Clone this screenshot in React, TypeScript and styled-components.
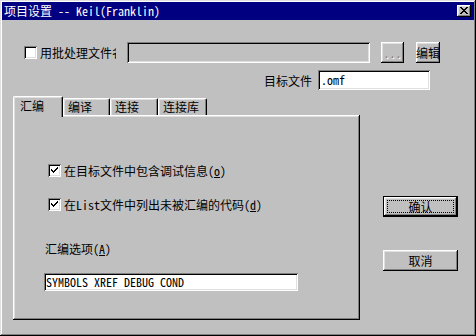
import React from "react";
import styled, { createGlobalStyle } from "styled-components";

const FONT = `"Noto Sans Mono CJK SC", "Noto Sans CJK SC", "Liberation Mono", monospace`;

const raised = `inset -1px -1px #000, inset 1px 1px #fff, inset -2px -2px #808080, inset 2px 2px #dfdfdf`;
const sunken = `inset 1px 1px #808080, inset -1px -1px #fff, inset 2px 2px #000, inset -2px -2px #dfdfdf`;

const Global = createGlobalStyle`
  html, body { margin: 0; padding: 0; background: #c0c0c0; }
  body { font-family: ${FONT}; font-size: 12px; color: #000; }
  * { box-sizing: border-box; }
`;

const Window = styled.div`
  width: 476px;
  height: 336px;
  padding: 2px;
  background: #c0c0c0;
  box-shadow: inset -1px -1px #000, inset 1px 1px #dfdfdf, inset -2px -2px #808080, inset 2px 2px #fff;
  display: flex;
  flex-direction: column;
`;

const TitleBar = styled.div`
  height: 18px;
  background: #000080;
  color: #fff;
  display: flex;
  align-items: center;
  justify-content: space-between;
  padding: 0 3px 0 2px;
  line-height: 12px;
`;

const CloseBtn = styled.div`
  width: 14px;
  height: 12px;
  background: #c0c0c0;
  box-shadow: ${raised};
  display: flex;
  align-items: center;
  justify-content: center;
  padding-bottom: 1px;
`;

const Content = styled.div`
  display: flex;
  flex-direction: column;
  padding-top: 22px;
`;

const Row = styled.div`
  height: 21px;
  display: flex;
  align-items: center;
  padding-left: 22px;
`;

const TargetRow = styled.div`
  margin-top: 7px;
  height: 20px;
  display: flex;
  align-items: center;
  justify-content: flex-end;
  padding-right: 44px;
`;

const Box = styled.div<{ $gap?: number }>`
  width: 13px;
  height: 13px;
  flex: none;
  background: #fff;
  box-shadow: ${sunken};
  display: flex;
  align-items: center;
  justify-content: center;
  margin-right: ${(p) => p.$gap ?? 3}px;
`;

const ClipLabel = styled.span`
  width: 76px;
  overflow: hidden;
  white-space: nowrap;
  line-height: 14px;
`;

const Field = styled.div<{ $w: number; $h: number; $ml: number; $disabled?: boolean }>`
  width: ${(p) => p.$w}px;
  height: ${(p) => p.$h}px;
  margin-left: ${(p) => p.$ml}px;
  background: ${(p) => (p.$disabled ? "#c0c0c0" : "#fff")};
  box-shadow: ${sunken};
  display: flex;
  align-items: center;
  padding-left: 3px;
  white-space: nowrap;
  line-height: 14px;
`;

const Button = styled.div<{ $w: number; $h: number; $ml?: number; $mt?: number; $dim?: boolean }>`
  width: ${(p) => p.$w}px;
  height: ${(p) => p.$h}px;
  margin-left: ${(p) => p.$ml ?? 0}px;
  margin-top: ${(p) => p.$mt ?? 0}px;
  background: #c0c0c0;
  box-shadow: ${raised};
  display: flex;
  align-items: center;
  justify-content: center;
  color: ${(p) => (p.$dim ? "#808080" : "#000")};
  text-shadow: ${(p) => (p.$dim ? "1px 1px #fff" : "none")};
  line-height: 14px;
  white-space: nowrap;
`;

const DefaultButton = styled.div<{ $mt: number }>`
  width: 75px;
  height: 21px;
  margin-top: ${(p) => p.$mt}px;
  border: 1px solid #000;
  background: #c0c0c0;
  box-shadow: ${raised};
  padding: 3px;
  display: flex;
`;

const FocusRing = styled.div`
  flex: 1;
  border: 1px dotted #000;
  display: flex;
  align-items: center;
  justify-content: center;
  line-height: 12px;
`;

const Main = styled.div`
  margin-top: 6px;
  display: flex;
  padding-left: 11px;
`;

const TabArea = styled.div`
  width: 347px;
  display: flex;
  flex-direction: column;
`;

const TabRow = styled.div`
  height: 19px;
  display: flex;
  align-items: flex-end;
`;

const Tab = styled.div<{ $w: number; $active?: boolean }>`
  width: ${(p) => p.$w}px;
  height: ${(p) => (p.$active ? 21 : 17)}px;
  margin-bottom: ${(p) => (p.$active ? -2 : 0)}px;
  position: relative;
  z-index: ${(p) => (p.$active ? 2 : 1)};
  background: #c0c0c0;
  border-top: 1px solid #fff;
  border-left: 1px solid #fff;
  border-right: 1px solid #000;
  border-radius: 2px 2px 0 0;
  box-shadow: inset -1px 0 #808080, inset 1px 1px #dfdfdf;
  padding-left: ${(p) => (p.$active ? 6 : 4)}px;
  padding-top: ${(p) => (p.$active ? 2 : 1)}px;
  line-height: 13px;
  white-space: nowrap;
`;

const Panel = styled.div`
  height: 205px;
  background: #c0c0c0;
  box-shadow: inset -1px -1px #000, inset 1px 1px #fff, inset -2px -2px #808080, inset 2px 2px #dfdfdf;
  display: flex;
  flex-direction: column;
  padding: 49px 0 0 31px;
`;

const CheckRow = styled.div<{ $mt: number }>`
  margin-top: ${(p) => p.$mt}px;
  margin-left: 4px;
  height: 13px;
  display: flex;
  align-items: center;
  line-height: 14px;
  white-space: nowrap;
`;

const OptionLabel = styled.div`
  margin-top: 31px;
  padding-left: 1px;
  line-height: 14px;
`;

const OptionField = styled.div`
  margin-top: 17px;
  width: 254px;
  height: 18px;
  background: #fff;
  box-shadow: ${sunken};
  display: flex;
  align-items: center;
  padding-left: 2px;
  line-height: 12px;
  white-space: nowrap;
`;

const ButtonColumn = styled.div`
  margin-left: 23px;
  width: 75px;
  display: flex;
  flex-direction: column;
`;

const Check = () => (
  <svg width="9" height="9" viewBox="0 0 9 9" shapeRendering="crispEdges">
    <path d="M1 3h1v1h1v1h1V4h1V3h1V2h1V1h1v2H7v1H6v1H5v1H4v1H3V6H2V5H1z" fill="#000" />
  </svg>
);

const XIcon = () => (
  <svg width="8" height="7" viewBox="0 0 8 7" shapeRendering="crispEdges">
    <path d="M0 0h2v1h1v1h2V1h1V0h2v1H7v1H6v1H5v1h1v1h1v1h1v1H6V6H5V5H3v1H2v1H0V6h1V5h1V4h1V3H2V2H1V1H0z" fill="#000" />
  </svg>
);

export default function App() {
  return (
    <>
      <Global />
      <Window>
        <TitleBar>
          <span>项目设置 -- Keil(Franklin)</span>
          <CloseBtn>
            <XIcon />
          </CloseBtn>
        </TitleBar>
        <Content>
          <Row>
            <Box />
            <ClipLabel>用批处理文件名</ClipLabel>
            <Field $w={243} $h={21} $ml={11} $disabled />
            <Button $w={23} $h={21} $ml={11} $dim>...</Button>
            <Button $w={24} $h={21} $ml={12}>编辑</Button>
          </Row>
          <TargetRow>
            <span>目标文件</span>
            <Field $w={112} $h={20} $ml={6}>.omf</Field>
          </TargetRow>
          <Main>
            <TabArea>
              <TabRow>
                <Tab $w={50} $active>汇编</Tab>
                <Tab $w={47}>编译</Tab>
                <Tab $w={48}>连接</Tab>
                <Tab $w={49}>连接库</Tab>
              </TabRow>
              <Panel>
                <CheckRow $mt={0}>
                  <Box><Check /></Box>
                  在目标文件中包含调试信息(<u>o</u>)
                </CheckRow>
                <CheckRow $mt={21}>
                  <Box><Check /></Box>
                  在List文件中列出未被汇编的代码(<u>d</u>)
                </CheckRow>
                <OptionLabel>
                  汇编选项(<u>A</u>)
                </OptionLabel>
                <OptionField>SYMBOLS XREF DEBUG COND</OptionField>
              </Panel>
            </TabArea>
            <ButtonColumn>
              <DefaultButton $mt={100}>
                <FocusRing>确认</FocusRing>
              </DefaultButton>
              <Button $w={75} $h={21} $mt={33}>取消</Button>
            </ButtonColumn>
          </Main>
        </Content>
      </Window>
    </>
  );
}
